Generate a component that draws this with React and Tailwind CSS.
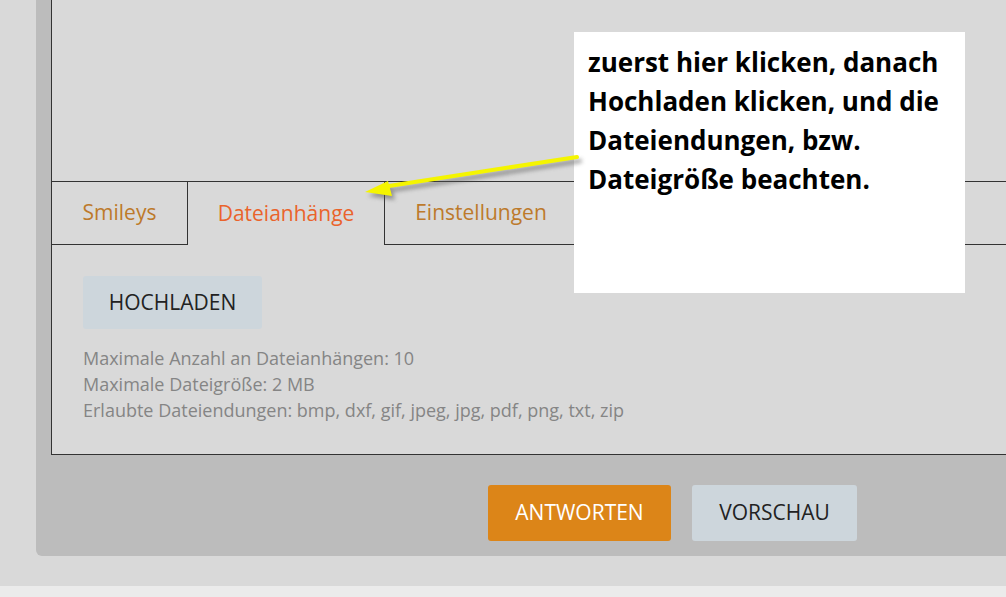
export default function App() {
  const ui = { fontFamily: '"Open Sans", "Noto Sans", sans-serif' };
  return (
    <div className="w-full h-[597px] bg-[#ebebeb] overflow-hidden relative" style={ui}>
      <div className="h-[586px] bg-[#d9d9d9] pl-[36px]">
        <div className="h-[556px] bg-[#bcbcbc] rounded-bl-[6px] pl-[15px] flex flex-col">
          {/* reply editor box */}
          <div className="h-[455px] bg-[#d9d9d9] border-l border-b border-[#333] flex flex-col">
            <div className="h-[181px] flex-none" />
            {/* tab strip */}
            <div className="h-[64px] flex-none border-t border-[#333] flex">
              <div className="w-[136px] border-r border-b border-[#333] flex items-center justify-center text-[21px] text-[#bd7a2b]">
                Smileys
              </div>
              <div className="w-[197px] border-r border-[#333] flex items-center justify-center text-[21px] text-[#ea632b]">
                Dateianhänge
              </div>
              <div className="w-[193px] border-r border-b border-[#333] flex items-center justify-center text-[21px] text-[#bd7a2b]">
                Einstellungen
              </div>
              <div className="flex-1 border-b border-[#333]" />
            </div>
            {/* attachments panel */}
            <div className="pl-[31px] pt-[31px] flex flex-col items-start">
              <button className="w-[179px] h-[53px] bg-[#cdd6dc] rounded-[3px] text-[21px] text-[#222]">
                HOCHLADEN
              </button>
              <div className="mt-[16px] text-[18px] leading-[26px] text-[#858585]">
                <div>Maximale Anzahl an Dateianhängen: 10</div>
                <div>Maximale Dateigröße: 2 MB</div>
                <div>Erlaubte Dateiendungen: bmp, dxf, gif, jpeg, jpg, pdf, png, txt, zip</div>
              </div>
            </div>
          </div>
          {/* submit buttons */}
          <div className="pt-[30px] pl-[437px] flex gap-[21px]">
            <button className="w-[183px] h-[56px] bg-[#dc8518] rounded-[3px] text-[21px] text-white">
              ANTWORTEN
            </button>
            <button className="w-[165px] h-[56px] bg-[#cdd6dc] rounded-[3px] text-[21px] text-[#222]">
              VORSCHAU
            </button>
          </div>
        </div>
      </div>

      {/* annotation note */}
      <div className="absolute left-[574px] top-[32px] w-[391px] h-[261px] bg-white pl-[14px] pt-[11px] text-[26px] leading-[39px] font-bold text-black">
        <div>zuerst hier klicken, danach</div>
        <div>Hochladen klicken, und die</div>
        <div>Dateiendungen, bzw.</div>
        <div>Dateigröße beachten.</div>
      </div>

      {/* annotation arrow */}
      <svg className="absolute left-0 top-0 pointer-events-none" width="1006" height="597" viewBox="0 0 1006 597">
        <defs>
          <filter id="arrowShadow" x="-10%" y="-50%" width="120%" height="200%">
            <feGaussianBlur stdDeviation="2" />
          </filter>
        </defs>
        <g transform="translate(3,4)" opacity="0.55" filter="url(#arrowShadow)">
          <path d="M577 157 L389 186" stroke="#555" strokeWidth="4" strokeLinecap="round" />
          <path d="M365 192 L388 181 L392 196 Z" fill="#555" />
        </g>
        <path d="M577 157 L389 186" stroke="#f5f500" strokeWidth="4" strokeLinecap="round" />
        <path d="M365 192 L388 181 L392 196 Z" fill="#f5f500" />
      </svg>
    </div>
  );
}
